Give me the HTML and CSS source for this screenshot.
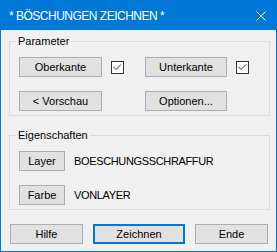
FILE: index.html
```html
<!DOCTYPE html>
<html lang="de">
<head>
    <meta charset="UTF-8">
    <meta name="viewport" content="width=device-width, initial-scale=1.0">
    <title>Böschungen zeichnen</title>
    <link rel="stylesheet" href="styles.css">
</head>
<body>

<div class="dialog">
    <div class="titlebar">
        <span class="title">* BÖSCHUNGEN ZEICHNEN *</span>
        <svg class="close" width="10" height="10" viewBox="0 0 10 10">
            <path d="M0.5 0.5 L9.5 9.5 M9.5 0.5 L0.5 9.5" stroke="#fff" stroke-width="1" fill="none"/>
        </svg>
    </div>

    <div class="content">
        <fieldset class="group">
            <legend>Parameter</legend>
            <div class="param-grid">
                <button class="btn btn-wide">Oberkante</button>
                <span class="check"><svg width="11" height="11" viewBox="0 0 11 11"><path d="M1.5 5 L4 7.5 L9 2.5" stroke="#333" stroke-width="1" fill="none"/></svg></span>
                <button class="btn btn-mid">Unterkante</button>
                <span class="check"><svg width="11" height="11" viewBox="0 0 11 11"><path d="M1.5 5 L4 7.5 L9 2.5" stroke="#333" stroke-width="1" fill="none"/></svg></span>
                <button class="btn btn-wide">&lt; Vorschau</button>
                <span></span>
                <button class="btn btn-mid">Optionen...</button>
            </div>
        </fieldset>

        <fieldset class="group group-props">
            <legend>Eigenschaften</legend>
            <div class="prop-row">
                <button class="btn btn-small">Layer</button>
                <span class="prop-value">BOESCHUNGSSCHRAFFUR</span>
            </div>
            <div class="prop-row">
                <button class="btn btn-small">Farbe</button>
                <span class="prop-value">VONLAYER</span>
            </div>
        </fieldset>

        <div class="actions">
            <button class="btn btn-action">Hilfe</button>
            <button class="btn btn-default">Zeichnen</button>
            <button class="btn btn-action">Ende</button>
        </div>
    </div>
</div>

</body>
</html>
```

FILE: styles.css
```css
body {
    margin: 0;
    font-family: "Liberation Sans", Arial, sans-serif;
    font-size: 11px;
    color: #000;
    background-color: #f0f0f0;
}
.dialog {
    width: 277px;
    height: 252px;
    box-sizing: border-box;
    border: 1px solid #0078d7;
    background-color: #f0f0f0;
}
.titlebar {
    height: 29px;
    display: flex;
    align-items: center;
    justify-content: space-between;
    padding: 0 10px 0 8px;
    margin-top: -1px;
    padding-top: 1px;
    background-color: #0078d7;
    color: #fff;
}
.title {
    font-size: 12px;
    letter-spacing: -0.5px;
    margin-top: 1px;
}
.close {
    display: block;
    margin-top: 0;
}
.group {
    width: 261px;
    box-sizing: border-box;
    margin: 5px 0 0 8px;
    padding: 9px 0 4px 9px;
    border: 1px solid #dcdcdc;
    min-width: 0;
}
.group legend {
    padding: 0 2px;
    margin-left: -3px;
    line-height: 13px;
}
.group-props {
    margin-top: 13px;
}
.param-grid {
    display: grid;
    grid-template-columns: 83px 43px 82px auto;
    row-gap: 14px;
    align-items: start;
}
.btn {
    height: 20px;
    padding: 0;
    margin: 0;
    font-family: inherit;
    font-size: 11px;
    color: #000;
    background-color: #e1e1e1;
    border: 1px solid #adadad;
    box-sizing: border-box;
}
.btn-wide {
    width: 83px;
}
.btn-mid {
    width: 82px;
}
.btn-small {
    width: 46px;
}
.check {
    width: 13px;
    height: 13px;
    box-sizing: border-box;
    margin: 4px 0 0 9px;
    border: 1px solid #333;
    background: #fff;
}
.check svg {
    display: block;
}
.prop-row {
    display: flex;
    align-items: center;
    gap: 9px;
    height: 20px;
}
.prop-row + .prop-row {
    margin-top: 14px;
}
.prop-value {
    letter-spacing: -0.35px;
}
.actions {
    display: flex;
    gap: 10px;
    margin: 14px 0 0 9px;
}
.btn-action {
    width: 73px;
}
.btn-default {
    width: 92px;
    border: 2px solid #0078d7;
}
```
